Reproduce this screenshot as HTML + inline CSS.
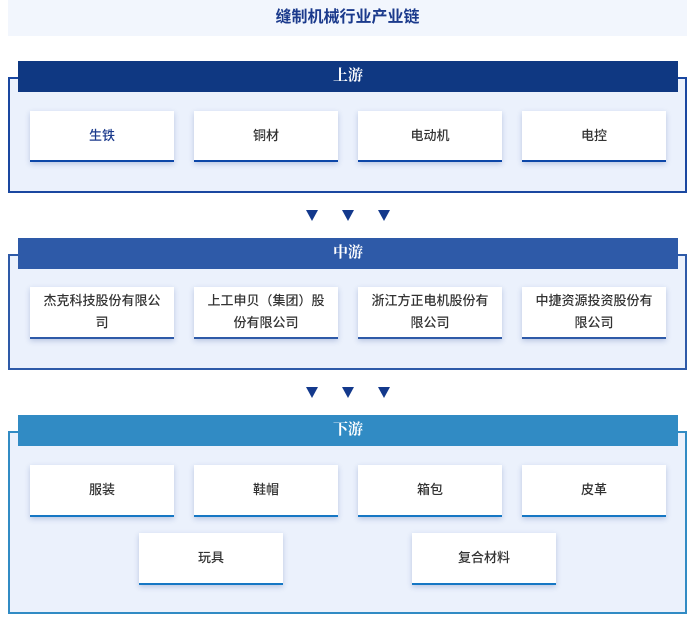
<!DOCTYPE html>
<html><head><meta charset="utf-8"><style>
*{margin:0;padding:0;box-sizing:border-box}
body{width:695px;height:620px;background:#fff;font-family:"Liberation Sans","Noto Sans CJK SC",sans-serif;position:relative;overflow:hidden}
.title{position:absolute;left:8px;top:0;width:679px;height:36px;background:#f2f6fd;color:#1b3a8c;font-weight:bold;font-size:16px;text-align:center;line-height:36px}
.frame{position:absolute;left:8px;width:679px;background:#ebf1fc;border:2px solid}
.hd{position:absolute;left:18px;width:660px;height:31px;color:#fff;font-weight:bold;font-size:15px;text-align:center;line-height:31px;font-family:"Liberation Serif","Noto Serif CJK SC",serif}
.card{position:absolute;width:144px;background:#fff;box-shadow:0 2px 5px rgba(40,70,150,.25);font-size:13px;font-weight:500;color:#333;text-align:center;display:flex;align-items:center;justify-content:center;line-height:22px;padding:0 8px}
.arr{position:absolute;width:0;height:0;border-left:6px solid transparent;border-right:6px solid transparent;border-top:11px solid #13398c}
</style></head><body>
<div class="title">缝制机械行业产业链</div>

<div class="frame" style="top:77px;height:116px;border-color:#1a47a0"></div>
<div class="hd" style="top:61px;background:#0f3882">上游</div>
<div class="card" style="left:30px;top:111px;height:51px;border-bottom:2px solid #0d47a8;color:#1b3a8c">生铁</div>
<div class="card" style="left:194px;top:111px;height:51px;border-bottom:2px solid #0d47a8">铜材</div>
<div class="card" style="left:358px;top:111px;height:51px;border-bottom:2px solid #0d47a8">电动机</div>
<div class="card" style="left:522px;top:111px;height:51px;border-bottom:2px solid #0d47a8">电控</div>

<div class="arr" style="left:306px;top:210px"></div>
<div class="arr" style="left:342px;top:210px"></div>
<div class="arr" style="left:378px;top:210px"></div>

<div class="frame" style="top:254px;height:116px;border-color:#2e5aa8"></div>
<div class="hd" style="top:238px;background:#2e5aa8">中游</div>
<div class="card" style="left:30px;top:287px;height:52px;border-bottom:2px solid #2e5aa8">杰克科技股份有限公司</div>
<div class="card" style="left:194px;top:287px;height:52px;border-bottom:2px solid #2e5aa8">上工申贝（集团）股份有限公司</div>
<div class="card" style="left:358px;top:287px;height:52px;border-bottom:2px solid #2e5aa8">浙江方正电机股份有限公司</div>
<div class="card" style="left:522px;top:287px;height:52px;border-bottom:2px solid #2e5aa8">中捷资源投资股份有限公司</div>

<div class="arr" style="left:306px;top:387px"></div>
<div class="arr" style="left:342px;top:387px"></div>
<div class="arr" style="left:378px;top:387px"></div>

<div class="frame" style="top:431px;height:183px;border-color:#318bc4"></div>
<div class="hd" style="top:415px;background:#318bc4">下游</div>
<div class="card" style="left:30px;top:465px;height:52px;border-bottom:2px solid #1677c4">服装</div>
<div class="card" style="left:194px;top:465px;height:52px;border-bottom:2px solid #1677c4">鞋帽</div>
<div class="card" style="left:358px;top:465px;height:52px;border-bottom:2px solid #1677c4">箱包</div>
<div class="card" style="left:522px;top:465px;height:52px;border-bottom:2px solid #1677c4">皮革</div>
<div class="card" style="left:139px;top:533px;height:52px;border-bottom:2px solid #1677c4">玩具</div>
<div class="card" style="left:412px;top:533px;height:52px;border-bottom:2px solid #1677c4">复合材料</div>
</body></html>
